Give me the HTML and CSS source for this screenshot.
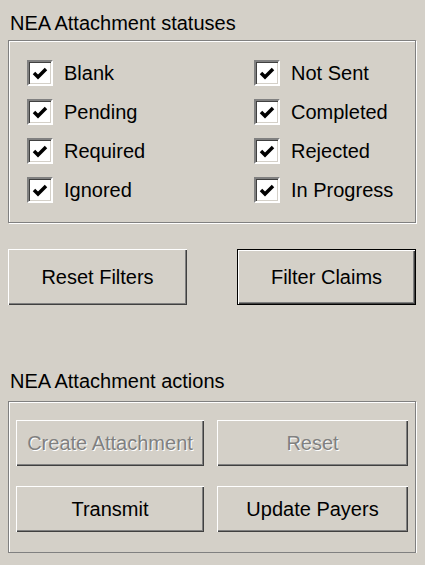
FILE: index.html
```html
<!DOCTYPE html>
<html lang="en">
<head>
  <meta charset="UTF-8" />
  <title>NEA Attachments</title>
  <link rel="stylesheet" href="styles.css">
</head>
<body>
  <main class="panel">
    <!-- Status filters -->
    <div class="legend">NEA Attachment statuses</div>
    <section class="group statuses">
      <label class="check"><span class="box"><svg viewBox="0 0 22 22"><polyline points="5,11 9,15 17,7" /></svg></span>Blank</label>
      <label class="check"><span class="box"><svg viewBox="0 0 22 22"><polyline points="5,11 9,15 17,7" /></svg></span>Not Sent</label>
      <label class="check"><span class="box"><svg viewBox="0 0 22 22"><polyline points="5,11 9,15 17,7" /></svg></span>Pending</label>
      <label class="check"><span class="box"><svg viewBox="0 0 22 22"><polyline points="5,11 9,15 17,7" /></svg></span>Completed</label>
      <label class="check"><span class="box"><svg viewBox="0 0 22 22"><polyline points="5,11 9,15 17,7" /></svg></span>Required</label>
      <label class="check"><span class="box"><svg viewBox="0 0 22 22"><polyline points="5,11 9,15 17,7" /></svg></span>Rejected</label>
      <label class="check"><span class="box"><svg viewBox="0 0 22 22"><polyline points="5,11 9,15 17,7" /></svg></span>Ignored</label>
      <label class="check"><span class="box"><svg viewBox="0 0 22 22"><polyline points="5,11 9,15 17,7" /></svg></span>In Progress</label>
    </section>

    <div class="filter-row">
      <button class="btn">Reset Filters</button>
      <button class="btn default">Filter Claims</button>
    </div>

    <!-- Actions -->
    <div class="legend second">NEA Attachment actions</div>
    <section class="group actions">
      <button class="btn" disabled>Create Attachment</button>
      <button class="btn" disabled>Reset</button>
      <button class="btn">Transmit</button>
      <button class="btn">Update Payers</button>
    </section>
  </main>
</body>
</html>
```

FILE: styles.css
```css
body {
  margin: 0;
  background: #d4d0c8;
  color: #000;
  font-family: "Liberation Sans", Arial, sans-serif;
  font-size: 20px;
}
.panel {
  padding: 11px 9px 0 8px;
}
.legend {
  margin: 0 0 5px 2px;
  height: 24px;
  line-height: 24px;
}
.legend.second {
  margin-top: 64px;
  margin-bottom: 8px;
}
.group {
  border: 1px solid #808080;
  box-shadow: inset 1px 1px #fff, 1px 1px #fff;
}
.statuses {
  display: grid;
  grid-template-columns: 227px 1fr;
  grid-auto-rows: 26px;
  row-gap: 13px;
  padding: 19px 0 19px 18px;
}
.check {
  display: flex;
  align-items: center;
  gap: 11px;
  line-height: 26px;
}
.check .box {
  width: 26px;
  height: 26px;
  box-sizing: border-box;
  background: #fff;
  border: 2px solid;
  border-color: #808080 #fff #fff #808080;
  box-shadow: inset 1px 1px #404040, inset -1px -1px #d4d0c8;
  display: flex;
  align-items: center;
  justify-content: center;
}
.check svg {
  width: 22px;
  height: 22px;
}
.check polyline {
  fill: none;
  stroke: #000;
  stroke-width: 3.5;
}
.filter-row {
  display: flex;
  justify-content: space-between;
  margin-top: 26px;
}
.btn {
  font: inherit;
  color: #000;
  background: #d4d0c8;
  border: none;
  padding: 0;
  box-shadow: inset 1px 1px #fff, inset -1px -1px #404040, inset -2px -2px #808080;
}
.filter-row .btn {
  width: 179px;
  height: 56px;
}
.btn.default {
  border: 1px solid #000;
}
.btn:disabled {
  color: #808080;
  text-shadow: 1px 1px #fff;
}
.actions {
  display: grid;
  grid-template-columns: 188px 191px;
  grid-auto-rows: 46px;
  column-gap: 13px;
  row-gap: 20px;
  padding: 18px 7px 20px 7px;
}
```
